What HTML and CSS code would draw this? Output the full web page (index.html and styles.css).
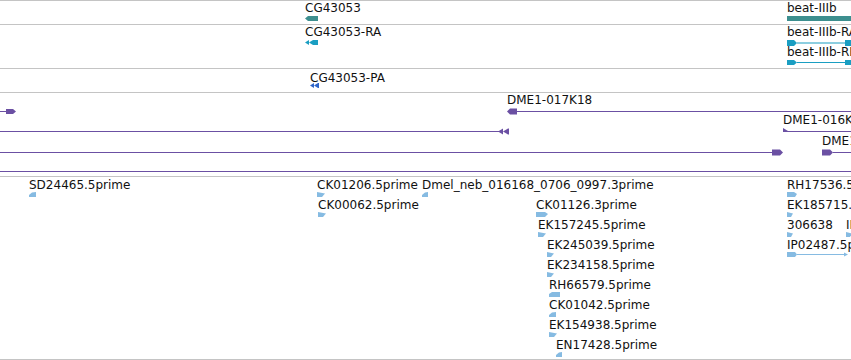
FILE: index.html
```html
<!DOCTYPE html>
<html lang="en">
<head>
    <meta charset="UTF-8">
    <title>Track view</title>
    <link rel="stylesheet" href="styles.css">
</head>
<body>
<div class="browser">

    <!-- Genes -->
    <div class="track t-gene">
        <div class="feat" style="left:305px;top:1px">
            <div class="label">CG43053</div>
            <svg class="glyph" width="13" height="6"><polygon class="teal" points="0,3.5 3,1 13,1 13,6 3,6"/></svg>
        </div>
        <div class="feat" style="left:787px;top:1px">
            <div class="label">beat-IIIb</div>
            <svg class="glyph" width="70" height="6"><rect class="teal" x="0" y="1" width="70" height="5"/></svg>
        </div>
    </div>

    <!-- Transcripts -->
    <div class="track t-mrna">
        <div class="feat" style="left:305px;top:1px">
            <div class="label">CG43053-RA</div>
            <svg class="glyph" width="13" height="6"><g class="cyan"><polygon points="0,3.5 4,1 4,6"/><polygon points="4,3.5 8,1 13,1 13,6 8,6"/></g></svg>
        </div>
        <div class="feat" style="left:787px;top:1px">
            <div class="label">beat-IIIb-RA</div>
            <svg class="glyph" width="70" height="7"><g class="cyan"><polygon points="0,1 7,1 10,4 7,7 0,7"/><rect x="10" y="3.5" width="50" height="1"/><rect x="58" y="1" width="12" height="6"/></g></svg>
        </div>
        <div class="feat" style="left:787px;top:21px">
            <div class="label">beat-IIIb-RB</div>
            <svg class="glyph" width="70" height="7"><g class="cyan"><polygon points="0,1 7,1 10,3.5 7,6 0,6"/><rect x="10" y="3" width="50" height="1"/><rect x="58" y="1" width="12" height="5"/></g></svg>
        </div>
    </div>

    <!-- Proteins -->
    <div class="track t-prot">
        <div class="feat" style="left:310px;top:3px">
            <div class="label">CG43053-PA</div>
            <svg class="glyph up" width="9" height="5"><g class="blue"><polygon points="0,2.5 4,0 4,5"/><polygon points="4,2.5 8,0 9,0 9,5 8,5"/></g></svg>
        </div>
    </div>

    <!-- BAC clones -->
    <div class="track t-bac">
        <div class="feat" style="left:0;top:14px">
            <svg class="glyph" width="16" height="8"><g class="purple"><rect x="0" y="4" width="7" height="1"/><polygon points="6,2 13,2 16,4.5 13,7 6,7"/></g></svg>
        </div>
        <div class="feat" style="left:507px;top:1px">
            <div class="label">DME1-017K18</div>
            <svg class="glyph" width="344" height="8"><g class="purple"><polygon points="0,4.5 3,1.5 10,1.5 10,7.5 3,7.5"/><rect x="10" y="4" width="334" height="1"/></g></svg>
        </div>
        <div class="feat" style="left:0;top:34px">
            <svg class="glyph" width="509" height="8"><g class="purple"><rect x="0" y="4" width="499" height="1"/><polygon points="498,4.5 503,1.5 503,7.5"/><polygon points="503,4.5 508,1.5 509,1.5 509,7.5 508,7.5"/></g></svg>
        </div>
        <div class="feat" style="left:783px;top:21px">
            <div class="label">DME1-016K19</div>
            <svg class="glyph" width="68" height="8"><g class="purple"><polygon points="0,1 5,4 0,5"/><rect x="0" y="4" width="68" height="1"/></g></svg>
        </div>
        <div class="feat" style="left:0;top:55px">
            <svg class="glyph" width="783" height="8"><g class="purple"><rect x="0" y="4" width="773" height="1"/><polygon points="772,1.5 780,1.5 783,4.5 780,7.5 772,7.5"/></g></svg>
        </div>
        <div class="feat" style="left:822px;top:42px">
            <div class="label">DME1-018L03</div>
            <svg class="glyph" width="30" height="8"><g class="purple"><polygon points="0,1.5 8,1.5 11,4.5 8,7.5 0,7.5"/><rect x="11" y="4" width="19" height="1"/></g></svg>
        </div>
        <div class="feat" style="left:0;top:74px">
            <svg class="glyph" width="851" height="8"><rect class="purple" x="0" y="4" width="851" height="1"/></svg>
        </div>
    </div>

    <!-- ESTs -->
    <div class="track t-est">
        <div class="feat" style="left:29px;top:2px">
            <div class="label">SD24465.5prime</div>
            <svg class="glyph" width="7" height="5"><polygon class="est" points="7,0 3,0.5 0,3 0,5 7,5"/></svg>
        </div>
        <div class="feat" style="left:317px;top:2px">
            <div class="label">CK01206.5prime</div>
            <svg class="glyph" width="8" height="5"><polygon class="est" points="0,0 8,1.5 5,5 0,5"/></svg>
        </div>
        <div class="feat" style="left:422px;top:2px">
            <div class="label">Dmel_neb_016168_0706_0997.3prime</div>
            <svg class="glyph" width="6" height="5"><polygon class="est" points="6,0 3,0.5 0,3 0,5 6,5"/></svg>
        </div>
        <div class="feat" style="left:787px;top:2px">
            <div class="label">RH17536.5prime</div>
            <svg class="glyph" width="10" height="5"><polygon class="est" points="0,0 7,0 10,2 8,5 0,5"/></svg>
        </div>

        <div class="feat" style="left:318px;top:22px">
            <div class="label">CK00062.5prime</div>
            <svg class="glyph" width="8" height="5"><polygon class="est" points="0,0 8,1.5 5,5 0,5"/></svg>
        </div>
        <div class="feat" style="left:536px;top:22px">
            <div class="label">CK01126.3prime</div>
            <svg class="glyph" width="12" height="5"><polygon class="est" points="0,0 9,0 12,2 9,5 0,5"/></svg>
        </div>
        <div class="feat" style="left:787px;top:22px">
            <div class="label">EK185715.5prime</div>
            <svg class="glyph" width="6" height="5"><polygon class="est" points="0,0 6,1.5 4,5 0,5"/></svg>
        </div>

        <div class="feat" style="left:538px;top:42px">
            <div class="label">EK157245.5prime</div>
            <svg class="glyph" width="8" height="5"><polygon class="est" points="0,0 8,1.5 5,5 0,5"/></svg>
        </div>
        <div class="feat" style="left:787px;top:42px">
            <div class="label">306638</div>
            <svg class="glyph" width="6" height="5"><polygon class="est" points="0,0 6,1.5 4,5 0,5"/></svg>
        </div>
        <div class="feat" style="left:846px;top:42px">
            <div class="label">IP02211.5prime</div>
            <svg class="glyph" width="6" height="5"><polygon class="est" points="0,0 6,1.5 4,5 0,5"/></svg>
        </div>

        <div class="feat" style="left:547px;top:62px">
            <div class="label">EK245039.5prime</div>
            <svg class="glyph" width="7" height="5"><polygon class="est" points="0,0 7,1.5 4,5 0,5"/></svg>
        </div>
        <div class="feat" style="left:787px;top:62px">
            <div class="label">IP02487.5prime</div>
            <svg class="glyph" width="64" height="6"><g class="est"><polygon points="0,0 8,0 10,2.5 8,5 0,5"/><rect x="10" y="2" width="50" height="1"/><polygon points="57,0.5 61,2.5 57,4.5"/></g></svg>
        </div>

        <div class="feat" style="left:547px;top:82px">
            <div class="label">EK234158.5prime</div>
            <svg class="glyph" width="7" height="5"><polygon class="est" points="0,0 7,1.5 4,5 0,5"/></svg>
        </div>
        <div class="feat" style="left:549px;top:102px">
            <div class="label">RH66579.5prime</div>
            <svg class="glyph" width="11" height="5"><polygon class="est" points="3,0 11,0 11,5 0,5 0,2"/></svg>
        </div>
        <div class="feat" style="left:549px;top:122px">
            <div class="label">CK01042.5prime</div>
            <svg class="glyph" width="7" height="5"><polygon class="est" points="7,0 3,0.5 0,3 0,5 7,5"/></svg>
        </div>
        <div class="feat" style="left:549px;top:142px">
            <div class="label">EK154938.5prime</div>
            <svg class="glyph" width="8" height="5"><polygon class="est" points="0,0 8,1.5 5,5 0,5"/></svg>
        </div>
        <div class="feat" style="left:556px;top:162px">
            <div class="label">EN17428.5prime</div>
            <svg class="glyph" width="6" height="5"><polygon class="est" points="6,0 3,0.5 0,3 0,5 6,5"/></svg>
        </div>
    </div>

</div>
</body>
</html>
```

FILE: styles.css
```css
body {
    margin: 0;
    padding: 0;
    background: #ffffff;
    font-family: 'DejaVu Sans', sans-serif;
}

.browser {
    width: 851px;
    height: 360px;
    overflow: hidden;
    display: flex;
    flex-direction: column;
}

/* Tracks */
.track {
    position: relative;
    border-top: 1px solid #c4c4c4;
    flex: none;
}
.t-gene { height: 23px; }
.t-mrna { height: 43px; }
.t-prot { height: 23px; }
.t-bac  { height: 83px; }
.t-est  {
    height: 182px;
    border-bottom: 1px solid #c4c4c4;
}

/* Features sit on the track canvas at their genome position */
.feat {
    position: absolute;
    white-space: nowrap;
}
.label {
    font-size: 12px;
    line-height: 13px;
    color: #111111;
}
.glyph {
    display: block;
}
.glyph.up {
    margin-top: -2px;
}

.teal   { fill: #3d8f8f; }
.cyan   { fill: #1a9ec2; }
.blue   { fill: #2f66c9; }
.purple { fill: #6b50a3; }
.est    { fill: #86bbe2; }
```
